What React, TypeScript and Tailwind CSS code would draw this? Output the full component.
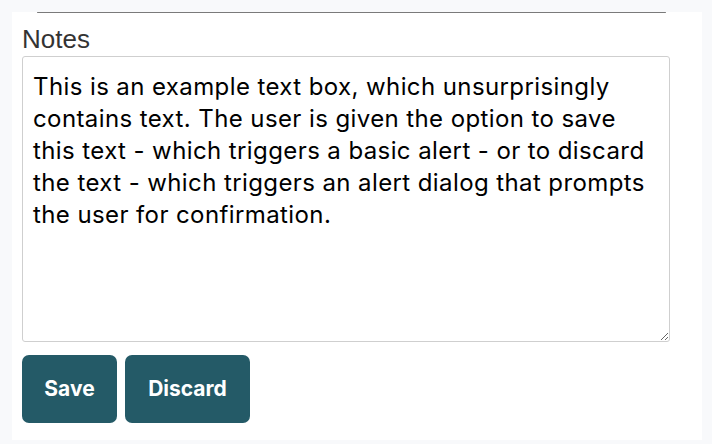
import React, { useState } from "react";

const initialText =
  "This is an example text box, which unsurprisingly contains text. The user is given the option to save this text - which triggers a basic alert - or to discard the text - which triggers an alert dialog that prompts the user for confirmation.";

export default function App() {
  const [notes, setNotes] = useState(initialText);

  return (
    <div className="min-h-screen bg-[#f8f9fb] px-3 pt-3">
      <div className="h-[428px] w-[690px] bg-white">
        <div className="ml-[25px] mr-[36px] h-px rounded-full bg-[#7a7a7a]" />
        <div className="px-[10px] pt-[11px]">
          <label className="block text-[26px] leading-[30px] text-[#333] font-['Liberation_Sans',sans-serif]">
            Notes
          </label>
          <textarea
            value={notes}
            onChange={(e) => setNotes(e.target.value)}
            className="mt-[2px] block h-[286px] w-[648px] rounded-[3px] border border-[#cfcfcf] px-[10px] py-[14px] text-[24px] leading-[32px] tracking-[0.4px] text-black outline-none font-['Inter',sans-serif]"
          />
          <div className="mt-[13px] flex gap-2">
            <button
              onClick={() => alert("Saved")}
              className="h-[68px] w-[95px] rounded-[7px] bg-[#245a67] text-[21px] font-bold text-white font-['Inter',sans-serif]"
            >
              Save
            </button>
            <button
              onClick={() => setNotes("")}
              className="h-[68px] w-[125px] rounded-[7px] bg-[#245a67] text-[21px] font-bold text-white font-['Inter',sans-serif]"
            >
              Discard
            </button>
          </div>
        </div>
      </div>
    </div>
  );
}
